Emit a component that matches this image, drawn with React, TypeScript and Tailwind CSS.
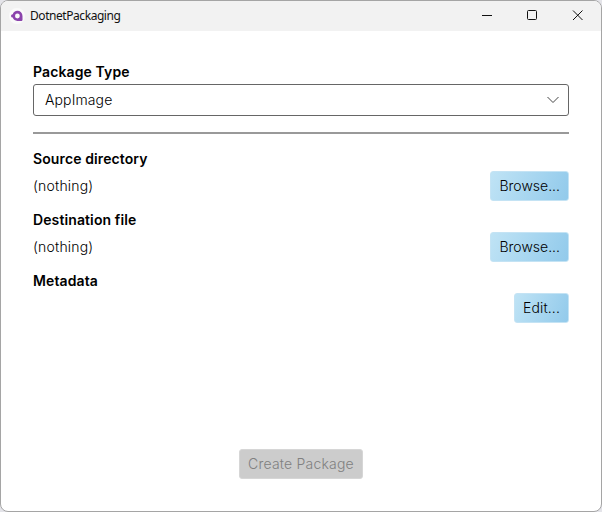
import type { ReactNode } from "react";

function TitleBar() {
  return (
    <header className="flex h-[30px] shrink-0 items-center bg-[#f2f2f2] pl-2">
      <svg width="16" height="16" viewBox="0 0 16 16" className="shrink-0">
        <circle cx="8" cy="8" r="8" fill="#fafafa" />
        <path d="M8.4 2.8a5.1 5.1 0 0 1 5.1 5.1v4.2a.8.8 0 0 1-.8.8H8.4a5.1 5.1 0 0 1-4.7-3.3 1.7 1.7 0 0 1 0-3.4 5.1 5.1 0 0 1 4.7-3.4Z" fill="#8b44ac" />
        <circle cx="8.4" cy="8" r="2.4" fill="#fafafa" />
      </svg>
      <span className="ml-[5px] flex-1 font-['Noto_Sans',sans-serif] text-[12px] leading-4 font-normal tracking-[-0.44px] text-[#111]">
        DotnetPackaging
      </span>
      <svg width="132" height="30" viewBox="0 0 132 30" fill="none" stroke="#111" className="shrink-0">
        <path d="M13 14.5h10" />
        <rect x="58.5" y="9.5" width="9" height="9" rx="1" />
        <path d="m104 9.5 9.5 9.5m0-9.5L104 19" />
      </svg>
    </header>
  );
}

function Heading({ children }: { children: ReactNode }) {
  return <h2 className="text-[14px] leading-[17px] font-semibold tracking-[0.11px]">{children}</h2>;
}

function ActionButton({ children }: { children: ReactNode }) {
  return (
    <button className="h-[30px] rounded-[3px] border border-[#c4e3f4] bg-linear-[111deg] from-[#bfe3f5] to-[#92caeb] px-2 pb-[2px] text-[14px] leading-[17px]">
      {children}
    </button>
  );
}

function Section({ title, value, action }: { title: string; value?: string; action: ReactNode }) {
  return (
    <section>
      <Heading>{title}</Heading>
      <div className="mt-1 flex h-[30px] items-center justify-between">
        <span className="pb-[2px] leading-[17px] tracking-[0.2px]">{value}</span>
        <ActionButton>{action}</ActionButton>
      </div>
    </section>
  );
}

export default function App() {
  return (
    <div className="h-[512px] w-[602px] bg-[#e4e4e9]">
      <div className="flex h-full flex-col overflow-hidden rounded-lg border border-[#a5a5a5] bg-white font-['Inter',sans-serif] text-[14px] font-light text-black">
        <TitleBar />
        <main className="flex flex-1 flex-col px-8 pt-8 pb-8">
          <Heading>Package Type</Heading>
          <div className="mt-1 flex h-8 items-center justify-between rounded-[3px] border border-[#666] pr-[9px] pl-[11px]">
            <span className="pb-px leading-[17px] tracking-[0.12px]">AppImage</span>
            <svg width="12" height="8" viewBox="0 0 12 8" fill="none" stroke="#444">
              <path d="m0.5 1 5.5 5.5L11.5 1" />
            </svg>
          </div>
          <div className="mt-4 h-0.5 shrink-0 bg-[#999]" />
          <div className="mt-4 flex flex-col gap-[10px]">
            <Section title="Source directory" value="(nothing)" action="Browse..." />
            <Section title="Destination file" value="(nothing)" action="Browse..." />
            <Section title="Metadata" action={<span className="tracking-[0.12px]">Edit...</span>} />
          </div>
          <button disabled className="mt-auto h-[30px] self-center rounded-[3px] border border-[#d6d6d6] bg-[#ccc] px-2 pb-px leading-[17px] tracking-[0.2px] text-[#808080]">
            Create Package
          </button>
        </main>
      </div>
    </div>
  );
}
